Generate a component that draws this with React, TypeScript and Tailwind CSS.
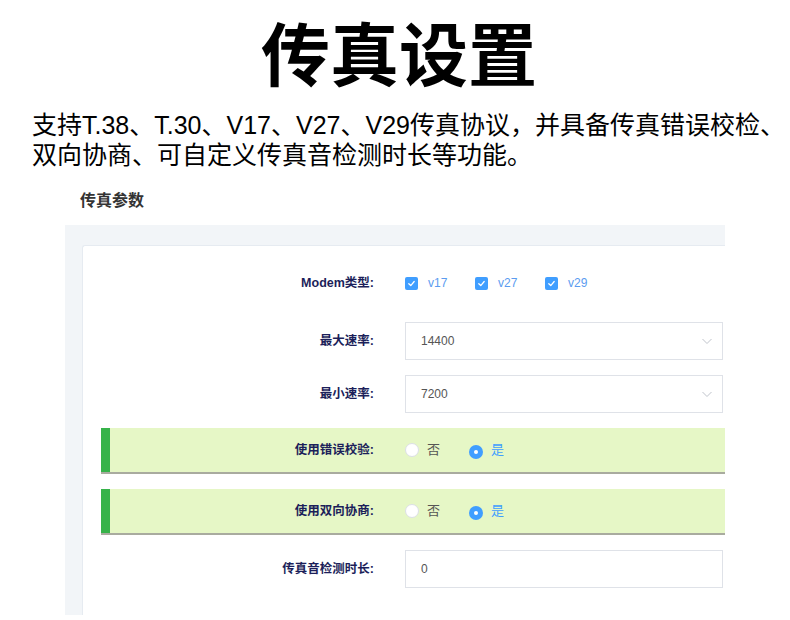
const font = { fontFamily: '"Liberation Sans", "Noto Sans CJK SC", sans-serif' }

const Check = () => (
  <span className="inline-flex h-[13px] w-[13px] items-center justify-center rounded-[2px] bg-[#409eff]">
    <svg width="9" height="9" viewBox="0 0 10 10" fill="none">
      <path d="M2 5.2 4.2 7.3 8 2.8" stroke="#fff" strokeWidth="1.4" strokeLinecap="round" strokeLinejoin="round" />
    </svg>
  </span>
)

const Radio = ({ on }: { on?: boolean }) =>
  on ? (
    <span className="inline-flex h-[14px] w-[14px] items-center justify-center rounded-full bg-[#409eff]">
      <span className="h-[4px] w-[4px] rounded-full bg-white" />
    </span>
  ) : (
    <span className="inline-block h-[14px] w-[14px] rounded-full border border-[#dcdfe6] bg-white" />
  )

const Label = ({ text, w = 'w-[322px]' }: { text: string; w?: string }) => (
  <div className={`${w} shrink-0 pr-[31px] text-right text-[12.5px] font-bold text-[#1c1f5a]`}>{text}</div>
)

const Field = ({ value, select }: { value: string; select?: boolean }) => (
  <div className="flex h-[38px] w-[318px] shrink-0 items-center justify-between border border-[#dfe2e8] bg-white pl-[15px] pr-[8px] text-[12px] text-[#555]">
    <span>{value}</span>
    {select && (
      <svg width="14" height="14" viewBox="0 0 14 14" fill="none">
        <path d="M2.5 5 7 9.5 11.5 5" stroke="#c0c4cc" strokeWidth="1" />
      </svg>
    )}
  </div>
)

const GreenRow = ({ text }: { text: string }) => (
  <div className="ml-[18px] flex h-[46px] w-[700px] items-center border-b-2 border-[#a9ab9f] bg-[#e6f7c6]">
    <div className="h-full w-[9px] bg-[#37b34a]" />
    <Label text={text} w="w-[295px]" />
    <div className="flex items-center text-[13px]">
      <Radio />
      <span className="ml-[8px] text-[#555]">否</span>
      <span className="ml-[29px]">
        <Radio on />
      </span>
      <span className="ml-[8px] text-[#409eff]">是</span>
    </div>
  </div>
)

export default function App() {
  return (
    <div className="h-[620px] w-[790px] overflow-hidden bg-white" style={font}>
      <h1
        className="pl-[8px] pt-[9px] text-center text-[69px] font-bold leading-[84px] text-black"
        style={{ fontFamily: '"Noto Sans CJK SC", sans-serif' }}
      >
        传真设置
      </h1>
      <p className="mt-[17px] pl-[32px] text-[25px] leading-[30px] text-black">
        支持T.38、T.30、V17、V27、V29传真协议，并具备传真错误校检、
        <br />
        双向协商、可自定义传真音检测时长等功能。
      </p>

      <div className="ml-[80px] mt-[21px] text-[16px] font-bold leading-[20px] text-[#333]">传真参数</div>

      <div className="ml-[65px] mt-[14px] h-[390px] w-[660px] overflow-hidden bg-[#f2f5f8] pl-[17px] pt-[20px]">
        <div className="h-full w-[720px] rounded-tl-[3px] border-l border-t border-[#e6ebf1] bg-white pt-[18px]">
          <div className="flex h-[38px] items-center">
            <Label text="Modem类型:" />
            <div className="flex items-center text-[12px] text-[#5b9cf0]">
              {['v17', 'v27', 'v29'].map((v) => (
                <div key={v} className="flex w-[70px] items-center">
                  <Check />
                  <span className="ml-[10px]">{v}</span>
                </div>
              ))}
            </div>
          </div>

          <div className="mt-[20px] flex items-center">
            <Label text="最大速率:" />
            <Field value="14400" select />
          </div>
          <div className="mt-[15px] flex items-center">
            <Label text="最小速率:" />
            <Field value="7200" select />
          </div>

          <div className="mt-[15px]">
            <GreenRow text="使用错误校验:" />
          </div>
          <div className="mt-[15px]">
            <GreenRow text="使用双向协商:" />
          </div>

          <div className="mt-[15px] flex items-center">
            <Label text="传真音检测时长:" />
            <Field value="0" />
          </div>
        </div>
      </div>
    </div>
  )
}
